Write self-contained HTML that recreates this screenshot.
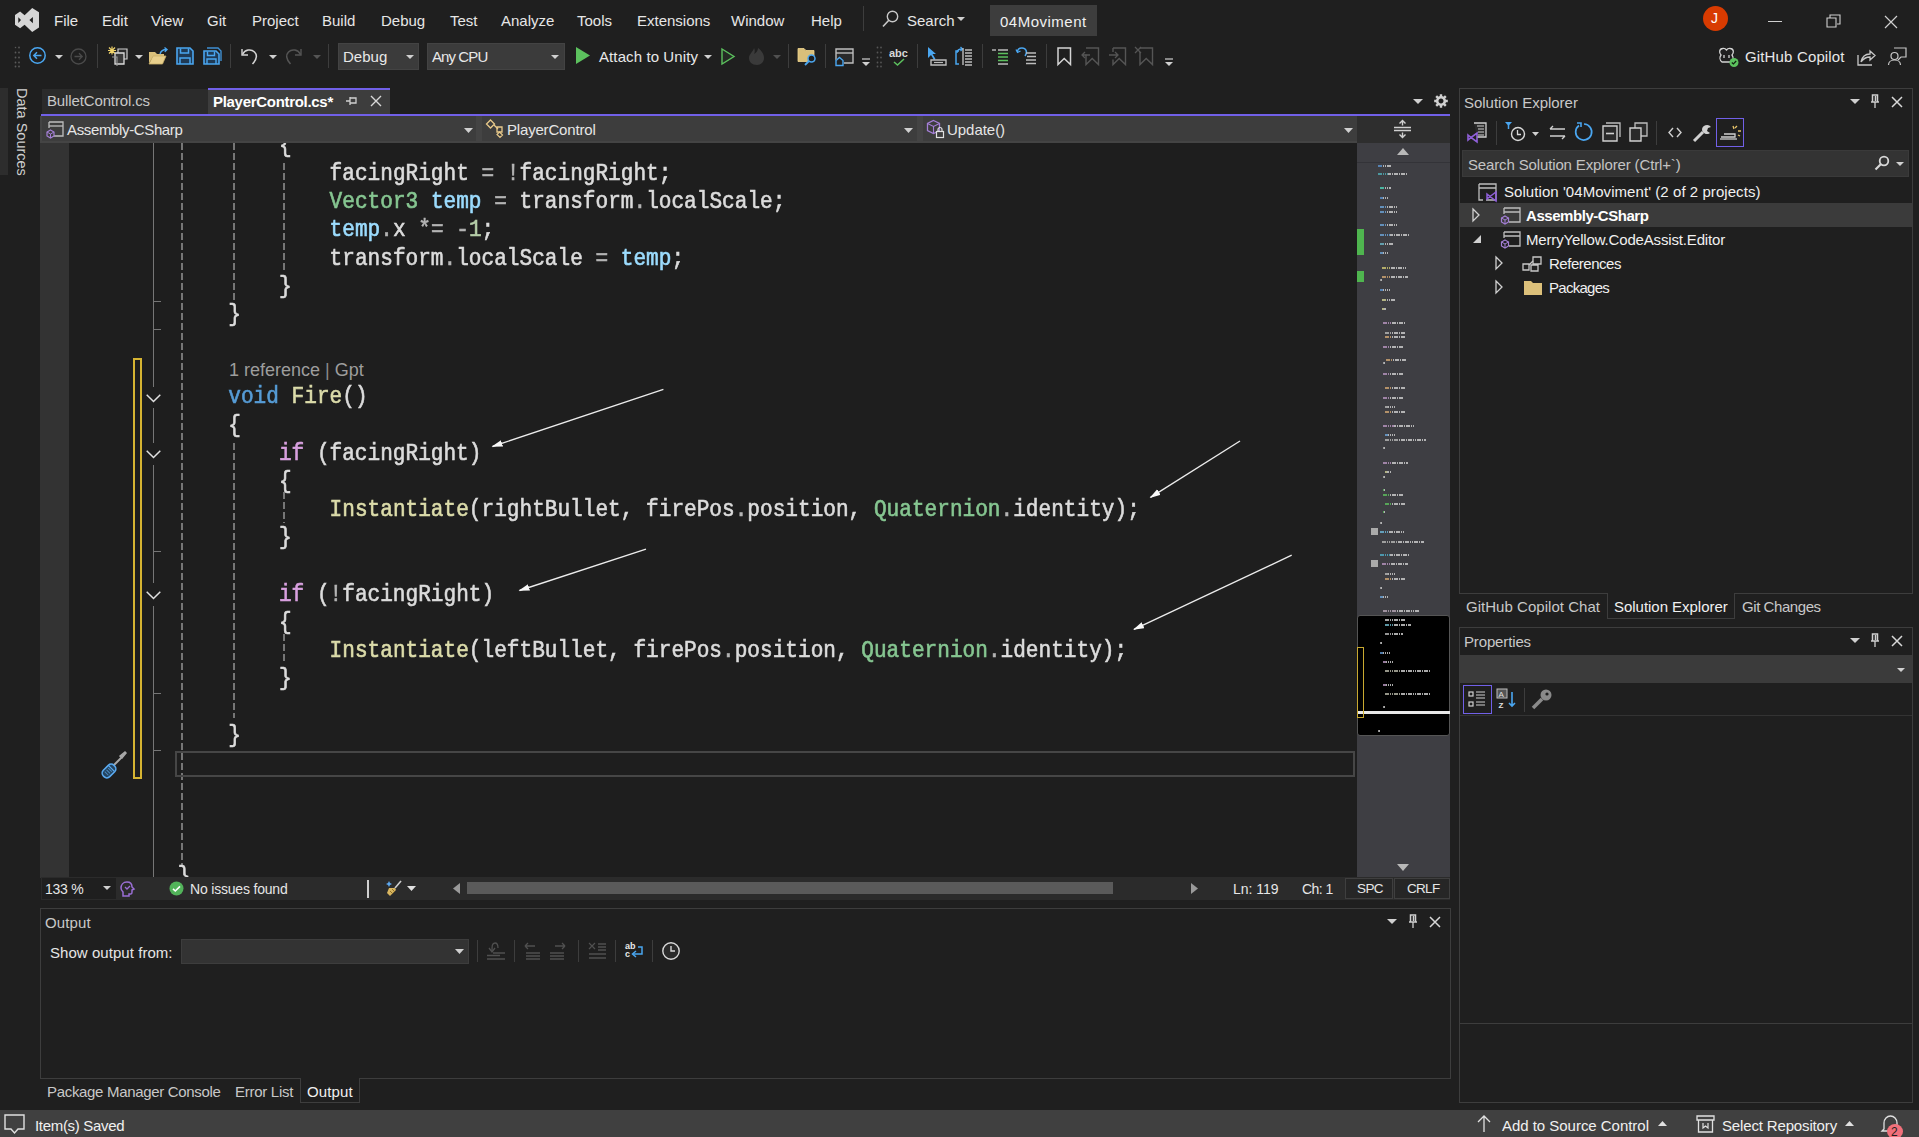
<!DOCTYPE html>
<html><head><meta charset="utf-8">
<style>
*{box-sizing:border-box;margin:0;padding:0}
html,body{width:1919px;height:1137px;overflow:hidden;background:#1f1f1f}
body{position:relative;font-family:"Liberation Sans",sans-serif;color:#f0f0f0;font-size:15px}
.a{position:absolute}
.t{position:absolute;white-space:pre;line-height:1}
.menu{top:13px;color:#e6e6e6;font-size:15px}
svg{position:absolute;overflow:visible}
/* code */
.code{position:absolute;font-family:"Liberation Mono",monospace;font-size:21.1px;white-space:pre;line-height:1;color:#dcdcdc;-webkit-text-stroke:0.55px currentColor;transform:scaleY(1.09);transform-origin:0 16px}
.kw{color:#569cd6}.ct{color:#d8a0df}.ty{color:#86c691}.lv{color:#9cdcfe}.fn{color:#dcdcaa}.nm{color:#b5cea8}.op{color:#b4b4b4}
</style></head><body>

<!-- ============ TITLE / MENU BAR ============ -->
<svg style="left:0;top:0" width="48" height="40"><path d="M15 15L20.1 11.6 24.6 15.3 32.2 8.1 39 12.2V27.4L32.2 31.9 24.6 24.8 20.1 28.2 15 24.8Z M18.3 17.2L21 20 18.3 22.9Z M32.9 17L29.4 20.1 32.9 23.2Z" fill="#d6d6d6" fill-rule="evenodd"/></svg>
<div class="t menu" style="left:54px">File</div>
<div class="t menu" style="left:102px">Edit</div>
<div class="t menu" style="left:151px">View</div>
<div class="t menu" style="left:207px">Git</div>
<div class="t menu" style="left:252px">Project</div>
<div class="t menu" style="left:322px">Build</div>
<div class="t menu" style="left:381px">Debug</div>
<div class="t menu" style="left:450px">Test</div>
<div class="t menu" style="left:501px">Analyze</div>
<div class="t menu" style="left:577px">Tools</div>
<div class="t menu" style="left:637px">Extensions</div>
<div class="t menu" style="left:731px">Window</div>
<div class="t menu" style="left:811px">Help</div>
<div class="a" style="left:863px;top:6px;width:1px;height:25px;background:#3d3d3d"></div>


<!-- ============ TOOLBAR ============ -->
<svg style="left:14px;top:46px" width="7" height="22"><g fill="#5a5a5a"><circle cx="1.5" cy="1.5" r=".75"/><circle cx="5" cy="1.5" r=".9"/><circle cx="1.5" cy="6.5" r=".9"/><circle cx="5" cy="6.5" r=".9"/><circle cx="1.5" cy="11.5" r=".9"/><circle cx="5" cy="11.5" r=".9"/><circle cx="1.5" cy="16.5" r=".9"/><circle cx="5" cy="16.5" r=".9"/><circle cx="1.5" cy="20.5" r=".9"/><circle cx="5" cy="20.5" r=".9"/></g></svg>
<svg style="left:29px;top:47px" width="17" height="17"><circle cx="8.5" cy="8.5" r="7.7" fill="none" stroke="#4aa6f0" stroke-width="1.5"/><path d="M12.5 8.5H5M8 5.2L4.8 8.5L8 11.8" fill="none" stroke="#4aa6f0" stroke-width="1.5"/></svg>
<svg style="left:55px;top:55px" width="8" height="4"><path d="M0 0H8L4 4Z" fill="#d0d0d0"/></svg>
<svg style="left:70px;top:48px" width="17" height="17"><circle cx="8.5" cy="8.5" r="7.5" fill="none" stroke="#4a4a4a" stroke-width="1.3"/><path d="M4.5 8.5H12M9 5.2L12.2 8.5L9 11.8" fill="none" stroke="#4a4a4a" stroke-width="1.3"/></svg>
<div class="a" style="left:97px;top:44px;width:1px;height:24px;background:#3d3d3d"></div>
<svg style="left:107px;top:46px" width="21" height="21"><path d="M11 3h9v10h-9z" fill="#2d2d2d" stroke="#cfcfcf" stroke-width="1.2"/><path d="M8 7h9v11H8z" fill="#3a3a3a" stroke="#dcdcdc" stroke-width="1.3"/><path d="M5 11h5v9" fill="none" stroke="#9a9a9a" stroke-width="1.1"/><g stroke="#f0d36a" stroke-width="1.2"><path d="M5 .5v8M1 4.5h8M2 1.5l6 6M8 1.5l-6 6"/></g></svg>
<svg style="left:135px;top:55px" width="8" height="4"><path d="M0 0H8L4 4Z" fill="#d0d0d0"/></svg>
<svg style="left:148px;top:47px" width="21" height="19"><path d="M1 5h6l2 2h7v3H5L1 16z" fill="#d9bf7a"/><path d="M1 17l4-8h13l-3.5 8z" fill="#e8cf8c" stroke="#c9ae68" stroke-width=".8"/><path d="M12 7c1-3.5 3-4.5 6.5-4.5M16.5 .5l2.5 2-2.2 2.4" fill="none" stroke="#4aa6f0" stroke-width="1.4"/></svg>
<svg style="left:176px;top:47px" width="18" height="18"><path d="M1 1h13l3 3v13H1z" fill="#1f3a55" stroke="#4aa6f0" stroke-width="1.6"/><path d="M4.5 1.5v4.5h8V1.5M4 17v-6h10v6" fill="none" stroke="#4aa6f0" stroke-width="1.5"/></svg>
<svg style="left:203px;top:47px" width="19" height="18"><path d="M4 1h11l3 3v10" fill="none" stroke="#3f8fd2" stroke-width="1.4"/><path d="M1 4h12l3 3v10H1z" fill="#1f3a55" stroke="#4aa6f0" stroke-width="1.6"/><path d="M4.5 4.5v4h7v-4M4 17v-5h9v5" fill="none" stroke="#4aa6f0" stroke-width="1.4"/></svg>
<div class="a" style="left:230px;top:44px;width:1px;height:24px;background:#3d3d3d"></div>
<svg style="left:240px;top:46px" width="18" height="20"><path d="M2 3v6h6" fill="none" stroke="#d4d4d4" stroke-width="1.4"/><path d="M2.5 8.5C5 3.5 11 2.5 14.5 6c3 3 2.5 7-2 12" fill="none" stroke="#d4d4d4" stroke-width="1.5"/></svg>
<svg style="left:269px;top:55px" width="8" height="4"><path d="M0 0H8L4 4Z" fill="#d0d0d0"/></svg>
<svg style="left:285px;top:46px" width="18" height="20"><path d="M16 3v6h-6" fill="none" stroke="#555" stroke-width="1.4"/><path d="M15.5 8.5C13 3.5 7 2.5 3.5 6c-3 3-2.5 7 2 12" fill="none" stroke="#555" stroke-width="1.5"/></svg>
<svg style="left:313px;top:55px" width="8" height="4"><path d="M0 0H8L4 4Z" fill="#555"/></svg>
<div class="a" style="left:328px;top:44px;width:1px;height:24px;background:#3d3d3d"></div>
<div class="a" style="left:338px;top:43px;width:81px;height:27px;background:#3b3b3b;border:1px solid #434343"></div>
<div class="t" style="left:343px;top:49px;color:#e8e8e8;letter-spacing:0.01px">Debug</div>
<svg style="left:406px;top:55px" width="8" height="4"><path d="M0 0H8L4 4Z" fill="#d0d0d0"/></svg>
<div class="a" style="left:427px;top:43px;width:138px;height:27px;background:#3b3b3b;border:1px solid #434343"></div>
<div class="t" style="left:432px;top:49px;color:#e8e8e8;letter-spacing:-0.91px">Any CPU</div>
<svg style="left:551px;top:55px" width="8" height="4"><path d="M0 0H8L4 4Z" fill="#d0d0d0"/></svg>
<svg style="left:576px;top:47px" width="14" height="17"><path d="M0 0L14 8.5L0 17Z" fill="#5cc15e"/></svg>
<div class="t" style="left:599px;top:49px;color:#e8e8e8;letter-spacing:0.1px">Attach to Unity</div>
<svg style="left:704px;top:55px" width="8" height="4"><path d="M0 0H8L4 4Z" fill="#d0d0d0"/></svg>
<svg style="left:721px;top:48px" width="14" height="17"><path d="M1 1L13 8.5L1 16Z" fill="#242c24" stroke="#5cc15e" stroke-width="1.4"/></svg>
<svg style="left:748px;top:46px" width="19" height="20"><path d="M9 19c-5 0-8-3-8-7 0-4 4-6 5-10 1 2 1 4 0 6 2-1 4-3 4-6 3 2 6 6 6 10 0 4-3 7-7 7z" fill="#3a3a3a"/></svg>
<svg style="left:773px;top:55px" width="8" height="4"><path d="M0 0H8L4 4Z" fill="#505050"/></svg>
<div class="a" style="left:788px;top:44px;width:1px;height:24px;background:#3d3d3d"></div>
<svg style="left:797px;top:47px" width="21" height="19"><path d="M1 1.5h6l2 2h8v11H1z" fill="#d9bf7a" stroke="#f0d58e" stroke-width=".8"/><circle cx="14.5" cy="11.5" r="3.5" fill="#1f1f1f" stroke="#4aa6f0" stroke-width="1.5"/><path d="M12 14l-4 4" stroke="#4aa6f0" stroke-width="1.8"/></svg>
<div class="a" style="left:825px;top:44px;width:1px;height:24px;background:#3d3d3d"></div>
<svg style="left:835px;top:48px" width="19" height="19"><path d="M1 1h17v14H1z" fill="#2a2a2a" stroke="#bdbdbd" stroke-width="1.4"/><path d="M1 5h17" stroke="#bdbdbd" stroke-width="1.4"/><path d="M0 12.5L4.5 8.5 9 12.5V18H0z" fill="#1f1f1f"/><path d="M1 12.5L4.5 9.5 8 12.5V17.5H1z" fill="none" stroke="#4aa6f0" stroke-width="1.4"/></svg>
<svg style="left:862px;top:59px" width="8" height="8"><path d="M0 0h8" stroke="#d0d0d0" stroke-width="1.2"/><path d="M0 3H8L4 7Z" fill="#d0d0d0"/></svg>
<svg style="left:876px;top:46px" width="7" height="22"><g fill="#555"><circle cx="1.5" cy="1.5" r=".9"/><circle cx="5" cy="1.5" r=".9"/><circle cx="1.5" cy="6.5" r=".9"/><circle cx="5" cy="6.5" r=".9"/><circle cx="1.5" cy="11.5" r=".9"/><circle cx="5" cy="11.5" r=".9"/><circle cx="1.5" cy="16.5" r=".9"/><circle cx="5" cy="16.5" r=".9"/><circle cx="1.5" cy="20.5" r=".9"/><circle cx="5" cy="20.5" r=".9"/></g></svg>
<div class="t" style="left:889px;top:48px;font-size:11px;font-weight:bold;color:#d8d8d8">abc</div>
<svg style="left:893px;top:58px" width="12" height="8"><path d="M1 4l3.5 3L11 1" fill="none" stroke="#5cc15e" stroke-width="1.5"/></svg>
<div class="a" style="left:917px;top:44px;width:1px;height:24px;background:#3d3d3d"></div>
<svg style="left:927px;top:47px" width="20" height="19"><path d="M1 0v11l3-3 3 5 1.5-1-3-5H9z" fill="#4aa6f0"/><path d="M4 13h15v5H4z" fill="none" stroke="#bdbdbd" stroke-width="1.4"/><path d="M7 15.5h9" stroke="#bdbdbd" stroke-width="1.2"/></svg>
<svg style="left:953px;top:47px" width="20" height="19"><path d="M6 4H3v13h3" fill="none" stroke="#4aa6f0" stroke-width="1.5"/><path d="M4 6c0-3 2-4 5-4M7.5 0l2 2-2 2" fill="none" stroke="#4aa6f0" stroke-width="1.3"/><path d="M10 1v17" stroke="#bdbdbd" stroke-width="1.4"/><g stroke="#bdbdbd" stroke-width="1.3"><path d="M12 3h7M12 6h7M12 9h7M12 12h7M12 15h7M12 18h7"/></g></svg>
<div class="a" style="left:982px;top:44px;width:1px;height:24px;background:#3d3d3d"></div>
<svg style="left:992px;top:48px" width="17" height="17"><g stroke-width="1.4"><path d="M0 2h4" stroke="#bdbdbd"/><path d="M6 2h10M6 16h10" stroke="#bdbdbd"/><path d="M6 5.5h10M6 9h10M6 12.5h10" stroke="#5cc15e"/></g></svg>
<svg style="left:1016px;top:47px" width="21" height="18"><path d="M9 9C12 5 10 1 6 1 3 1 1.5 3 1.5 5" fill="none" stroke="#4aa6f0" stroke-width="1.5"/><path d="M0 2.5l1.5 3 3-1.5" fill="none" stroke="#4aa6f0" stroke-width="1.3"/><g stroke="#bdbdbd" stroke-width="1.3"><path d="M10 6h10M11 9.5h9M10 13h10M10 16.5h10"/></g></svg>
<div class="a" style="left:1046px;top:44px;width:1px;height:24px;background:#3d3d3d"></div>
<svg style="left:1057px;top:47px" width="15" height="19"><path d="M1 1h12.5v16.5L7.2 11.5 1 17.5z" fill="none" stroke="#d4d4d4" stroke-width="1.5"/></svg>
<svg style="left:1082px;top:47px" width="18" height="19"><path d="M4 1h12.5v16.5L10.2 11.5 4 17.5v-10" fill="none" stroke="#555" stroke-width="1.4"/><path d="M0 8h8M3 5L0 8l3 3" fill="none" stroke="#555" stroke-width="1.3"/></svg>
<svg style="left:1109px;top:47px" width="18" height="19"><path d="M4 1h12.5v16.5L10.2 11.5 4 17.5v-5M4 1v4" fill="none" stroke="#555" stroke-width="1.4"/><path d="M0 8h9M6 5l3 3-3 3" fill="none" stroke="#555" stroke-width="1.3"/></svg>
<svg style="left:1135px;top:47px" width="19" height="19"><path d="M5 1h12.5v16.5L11.2 11.5 5 17.5V5" fill="none" stroke="#555" stroke-width="1.4"/><path d="M0 0l6 6M6 0L0 6" stroke="#555" stroke-width="1.3"/></svg>
<svg style="left:1165px;top:59px" width="8" height="8"><path d="M0 0h8" stroke="#d0d0d0" stroke-width="1.2"/><path d="M0 3H8L4 7Z" fill="#d0d0d0"/></svg>

<!-- right top -->
<div class="t menu" style="left:907px;top:13px">Search</div>
<svg style="left:882px;top:10px" width="17" height="18"><circle cx="10.5" cy="6.5" r="5.2" fill="none" stroke="#c8c8c8" stroke-width="1.4"/><path d="M6.8 10.2L1 16.5" stroke="#c8c8c8" stroke-width="1.6"/></svg>
<svg style="left:957px;top:17px" width="8" height="4"><path d="M0 0H8L4 4Z" fill="#d0d0d0"/></svg>
<div class="a" style="left:990px;top:5px;width:107px;height:31px;background:#3d3d3d"></div>
<div class="t" style="left:1000px;top:14px;color:#f0f0f0;letter-spacing:0.5px">04Moviment</div>
<div class="a" style="left:1703px;top:6px;width:25px;height:25px;border-radius:50%;background:#d83b01"></div>
<div class="t" style="left:1711px;top:11px;color:#fff;font-size:14px">J</div>
<div class="a" style="left:1768px;top:21px;width:14px;height:1px;background:#d0d0d0"></div>
<svg style="left:1826px;top:14px" width="15" height="14"><path d="M1 4h9v9H1z" fill="none" stroke="#d0d0d0" stroke-width="1.1"/><path d="M4 4V1h10v9h-3" fill="none" stroke="#d0d0d0" stroke-width="1.1"/></svg>
<svg style="left:1884px;top:15px" width="14" height="14"><path d="M1 1l12 12M13 1L1 13" stroke="#d0d0d0" stroke-width="1.2"/></svg>
<svg style="left:1718px;top:47px" width="21" height="20"><path d="M3 8C1 6 1 2 4.5 1.5 7 1 8.5 3 8.5 3S10 1 12.5 1.5C16 2 16 6 14 8c1.5 2 1.5 5-1 7H4C1.5 13 1.5 10 3 8z" fill="none" stroke="#d4d4d4" stroke-width="1.3"/><path d="M6 8v3M11 8v3" stroke="#d4d4d4" stroke-width="1.3"/><circle cx="16" cy="15.5" r="4.5" fill="#5cc15e"/><path d="M13.8 15.5l1.6 1.5 2.8-3" fill="none" stroke="#102010" stroke-width="1.2"/></svg>
<div class="t" style="left:1745px;top:49px;color:#e8e8e8;letter-spacing:0.15px">GitHub Copilot</div>
<svg style="left:1857px;top:48px" width="18" height="18"><path d="M1 7v10h14" fill="none" stroke="#c8c8c8" stroke-width="1.3"/><path d="M4 14c1-5 4-8 9-8V3l5 4.5-5 4.5V9c-4 0-7 2-9 5z" fill="none" stroke="#c8c8c8" stroke-width="1.3"/></svg>
<svg style="left:1888px;top:47px" width="19" height="19"><path d="M6 1h12v9h-5l-3 3" fill="none" stroke="#c8c8c8" stroke-width="1.2"/><circle cx="6.5" cy="9" r="3.5" fill="#1f1f1f" stroke="#c8c8c8" stroke-width="1.2"/><path d="M0.5 18c0-3 2.5-5 6-5s6 2 6 5" fill="none" stroke="#c8c8c8" stroke-width="1.2"/></svg>


<!-- ============ LEFT STRIP ============ -->
<div class="a" style="left:0;top:88px;width:8px;height:87px;background:#2d2d2d"></div>
<div class="t" style="left:13px;top:88px;color:#cfcfcf;font-size:14.5px;transform-origin:0 0;transform:translate(16px,0) rotate(90deg)">Data Sources</div>

<!-- ============ DOC TABS ============ -->
<div class="a" style="left:42px;top:89px;width:166px;height:25px;background:#2b2b2b"></div>
<div class="t" style="left:47px;top:93px;color:#c8c8c8;font-size:15px;letter-spacing:-0.13px">BulletControl.cs</div>
<div class="a" style="left:208px;top:88px;width:182px;height:26px;background:#3d3d3d;border-top:2px solid #7160e8"></div>
<div class="t" style="left:213px;top:94px;color:#fff;font-size:15px;font-weight:bold;letter-spacing:-0.3px">PlayerControl.cs*</div>
<svg style="left:346px;top:96px" width="12" height="10"><path d="M0 5h4M4 1v8M4 2h6v5H4M4 7" fill="none" stroke="#cfcfcf" stroke-width="1.3"/></svg>
<svg style="left:370px;top:95px" width="12" height="12"><path d="M1 1l10 10M11 1L1 11" stroke="#d8d8d8" stroke-width="1.4"/></svg>
<svg style="left:1413px;top:99px" width="10" height="5"><path d="M0 0H10L5 5Z" fill="#d0d0d0"/></svg>
<svg style="left:1434px;top:94px" width="14" height="14"><g transform="translate(7 7)"><circle r="3.8" fill="none" stroke="#d0d0d0" stroke-width="2.6"/><g stroke="#d0d0d0" stroke-width="2.4"><path d="M0-6.8V-4M0 4V6.8M-6.8 0H-4M4 0H6.8M-4.8-4.8l2 2M2.8 2.8l2 2M4.8-4.8l-2 2M-2.8 2.8l-2 2"/></g></g></svg>
<div class="a" style="left:41px;top:114px;width:1409px;height:2px;background:#7160e8"></div>

<!-- ============ NAV BAR ============ -->
<div class="a" style="left:40px;top:116px;width:1317px;height:27px;background:#444444"></div>
<div class="a" style="left:42px;top:116px;width:434px;height:25px;background:#3d3d3d"></div>
<div class="a" style="left:482px;top:116px;width:435px;height:25px;background:#3d3d3d"></div>
<div class="a" style="left:923px;top:116px;width:434px;height:25px;background:#3d3d3d"></div>
<div class="a" style="left:1357px;top:116px;width:93px;height:27px;background:#2e2e2e"></div>
<svg style="left:46px;top:121px" width="19" height="18"><path d="M3 1h14v14H6" fill="none" stroke="#bdbdbd" stroke-width="1.3"/><path d="M3 5h14" stroke="#bdbdbd" stroke-width="1.3"/><path d="M3 1v6" stroke="#bdbdbd" stroke-width="1.3"/><path d="M4.5 9l3.5 2v4l-3.5 2-3.5-2v-4z" fill="#3d3d3d" stroke="#a47fd6" stroke-width="1.2"/><path d="M1 11l3.5 2 3.5-2M4.5 13v4" fill="none" stroke="#a47fd6" stroke-width="1"/></svg>
<div class="t" style="left:67px;top:122px;color:#e6e6e6;letter-spacing:-0.36px">Assembly-CSharp</div>
<svg style="left:464px;top:128px" width="9" height="5"><path d="M0 0H9L4.5 5Z" fill="#d0d0d0"/></svg>
<svg style="left:486px;top:119px" width="20" height="20"><path d="M4.5 1l4 4-4 4-4-4z" fill="none" stroke="#e8c98a" stroke-width="1.3"/><path d="M8 6l4 4" stroke="#e8c98a" stroke-width="1.2"/><path d="M11 8h5v5h-5z" fill="none" stroke="#e8c98a" stroke-width="1.3"/><path d="M13.5 13l3 3-2.5 2.5-3-3z" fill="none" stroke="#e8c98a" stroke-width="1.2"/></svg>
<div class="t" style="left:507px;top:122px;color:#e6e6e6;letter-spacing:-0.18px">PlayerControl</div>
<svg style="left:904px;top:128px" width="9" height="5"><path d="M0 0H9L4.5 5Z" fill="#d0d0d0"/></svg>
<svg style="left:926px;top:119px" width="20" height="20"><path d="M7.5 1.5l6 3v7l-6 3-6-3v-7z" fill="none" stroke="#a47fd6" stroke-width="1.3"/><path d="M1.5 4.5l6 3 6-3M7.5 7.5v7" fill="none" stroke="#a47fd6" stroke-width="1.1"/><rect x="10.5" y="12.5" width="7" height="6" fill="#3d3d3d" stroke="#e0e0e0" stroke-width="1.2"/><path d="M12 12.5v-2a2 2 0 0 1 4 0v2" fill="none" stroke="#e0e0e0" stroke-width="1.2"/></svg>
<div class="t" style="left:947px;top:122px;color:#e6e6e6;letter-spacing:-0.04px">Update()</div>
<svg style="left:1344px;top:128px" width="9" height="5"><path d="M0 0H9L4.5 5Z" fill="#d0d0d0"/></svg>
<svg style="left:1394px;top:120px" width="17" height="18"><path d="M0 7.5h17M0 10.5h17" stroke="#d0d0d0" stroke-width="1.5"/><path d="M8.5 1v4.5M8.5 12.5V17M5.5 3.5l3-3 3 3M5.5 14.5l3 3 3-3" fill="none" stroke="#d0d0d0" stroke-width="1.4"/></svg>

<!-- ============ EDITOR ============ -->
<div class="a" style="left:41px;top:143px;width:1316px;height:735px;background:#1e1e1e"></div>
<div class="a" style="left:40px;top:143px;width:29px;height:735px;background:#333333"></div>


<div class="a" style="left:41px;top:143px;width:1316px;height:734px;overflow:hidden">
<div class="a" style="left:140px;top:0px;width:2px;height:723px;background:repeating-linear-gradient(#767676 0 7px,transparent 7px 10px)"></div><div class="a" style="left:192px;top:0px;width:2px;height:157px;background:repeating-linear-gradient(#767676 0 7px,transparent 7px 10px)"></div><div class="a" style="left:242px;top:20px;width:2px;height:110px;background:repeating-linear-gradient(#767676 0 7px,transparent 7px 10px)"></div><div class="a" style="left:192px;top:300px;width:2px;height:275px;background:repeating-linear-gradient(#767676 0 7px,transparent 7px 10px)"></div><div class="a" style="left:242px;top:349px;width:2px;height:31px;background:repeating-linear-gradient(#767676 0 7px,transparent 7px 10px)"></div><div class="a" style="left:242px;top:491px;width:2px;height:30px;background:repeating-linear-gradient(#767676 0 7px,transparent 7px 10px)"></div><div class="a" style="left:112px;top:0px;width:1px;height:244px;background:#767676"></div><div class="a" style="left:112px;top:158px;width:8px;height:1px;background:#767676"></div><div class="a" style="left:112px;top:186px;width:8px;height:1px;background:#767676"></div><svg style="left:105px;top:251px" width="15" height="9"><path d="M.7 .7L7.5 7.5L14.3 .7" fill="none" stroke="#e0e0e0" stroke-width="1.5"/></svg><div class="a" style="left:112px;top:265px;width:1px;height:35px;background:#767676"></div><svg style="left:105px;top:307px" width="15" height="9"><path d="M.7 .7L7.5 7.5L14.3 .7" fill="none" stroke="#e0e0e0" stroke-width="1.5"/></svg><div class="a" style="left:112px;top:322px;width:1px;height:118px;background:#767676"></div><div class="a" style="left:112px;top:408px;width:8px;height:1px;background:#767676"></div><svg style="left:105px;top:448px" width="15" height="9"><path d="M.7 .7L7.5 7.5L14.3 .7" fill="none" stroke="#e0e0e0" stroke-width="1.5"/></svg><div class="a" style="left:112px;top:463px;width:1px;height:271px;background:#767676"></div><div class="a" style="left:112px;top:550px;width:8px;height:1px;background:#767676"></div><div class="a" style="left:112px;top:607px;width:8px;height:1px;background:#767676"></div>
<div class="a" style="left:134px;top:608px;width:1180px;height:26px;border:2.5px solid #464646"></div>
<div class="a" style="left:92px;top:215px;width:9px;height:421px;border:2px solid #d6b432"></div>
<div class="t" style="left:188px;top:218px;font-size:18px;color:#9d9d9d">1 reference <span style="color:#8a8a8a">|</span> Gpt</div>
<div class="code" style="left:237.89999999999998px;top:-7.2px">{</div><div class="code" style="left:288.6px;top:21.0px">facingRight <span class="op">=</span> <span class="op">!</span>facingRight;</div><div class="code" style="left:288.6px;top:49.2px"><span class="ty">Vector3</span> <span class="lv">temp</span> <span class="op">=</span> transform<span class="op">.</span>localScale;</div><div class="code" style="left:288.6px;top:77.4px"><span class="lv">temp</span><span class="op">.</span>x <span class="op">*=</span> <span class="op">-</span><span class="nm">1</span>;</div><div class="code" style="left:288.6px;top:105.6px">transform<span class="op">.</span>localScale <span class="op">=</span> <span class="lv">temp</span>;</div><div class="code" style="left:237.89999999999998px;top:133.8px">}</div><div class="code" style="left:187.3px;top:162.0px">}</div><div class="code" style="left:187.3px;top:244.3px"><span class="kw">void</span> <span class="fn">Fire</span>()</div><div class="code" style="left:187.3px;top:272.5px">{</div><div class="code" style="left:237.89999999999998px;top:300.7px"><span class="ct">if</span> (facingRight)</div><div class="code" style="left:237.89999999999998px;top:328.9px">{</div><div class="code" style="left:288.6px;top:357.1px"><span class="fn">Instantiate</span>(rightBullet, firePos<span class="op">.</span>position, <span class="ty">Quaternion</span><span class="op">.</span>identity);</div><div class="code" style="left:237.89999999999998px;top:385.3px">}</div><div class="code" style="left:237.89999999999998px;top:441.7px"><span class="ct">if</span> (<span class="op">!</span>facingRight)</div><div class="code" style="left:237.89999999999998px;top:469.9px">{</div><div class="code" style="left:288.6px;top:498.1px"><span class="fn">Instantiate</span>(leftBullet, firePos<span class="op">.</span>position, <span class="ty">Quaternion</span><span class="op">.</span>identity);</div><div class="code" style="left:237.89999999999998px;top:526.3px">}</div><div class="code" style="left:187.3px;top:582.7px">}</div><div class="code" style="left:136.7px;top:723.7px">}</div>
<svg style="left:58px;top:607px" width="30" height="30"><path d="M14.5 15.5L23 7" stroke="#a8a8a8" stroke-width="2"/><path d="M21 6l5-4 1 1-4 5z" fill="#a8a8a8" stroke="#a8a8a8" stroke-width="1.5"/><g transform="translate(10 21) rotate(-45)"><rect x="-7.5" y="-4.5" width="15" height="9" rx="4" fill="#23435f" stroke="#5aaaf0" stroke-width="1.6"/><path d="M-3.5 -2.5v5M-1 -2.5v5M1.5 -2.5v5" stroke="#4a8ac0" stroke-width="1"/><path d="M3.5 -4v8" stroke="#5aaaf0" stroke-width="1.2"/></g></svg>
</div>


<!-- ============ MINIMAP ============ -->
<div class="a" style="left:1357px;top:143px;width:93px;height:734px;background:#3e3e43"></div>
<div class="a" style="left:1357px;top:162px;width:93px;height:1px;background:#333338"></div>
<svg style="left:1397px;top:148px" width="12" height="7"><path d="M0 7H12L6 0Z" fill="#b8b8b8"/></svg>
<svg style="left:1397px;top:864px" width="12" height="7"><path d="M0 0H12L6 7Z" fill="#b8b8b8"/></svg>
<div class="a" style="left:1357px;top:229px;width:7px;height:26px;background:#4fb54f"></div>
<div class="a" style="left:1357px;top:271px;width:7px;height:11px;background:#4fb54f"></div>
<div class="a" style="left:1371px;top:528px;width:7px;height:7px;background:#aaa"></div>
<div class="a" style="left:1371px;top:560px;width:7px;height:7px;background:#aaa"></div>
<div class="a" style="left:1357px;top:615px;width:93px;height:121px;background:#000;border:1px solid #555;border-radius:3px"></div>
<div class="a" style="left:1378px;top:165px;width:14px;height:2px;background:linear-gradient(90deg,#5b8fc7 0 35%,#c8c8c8 35%);-webkit-mask:repeating-linear-gradient(90deg,#000 0 1.6px,transparent 1.6px 2.3px);opacity:.85"></div><div class="a" style="left:1378px;top:173px;width:29px;height:2px;background:linear-gradient(90deg,#4fa7b0 0 35%,#c8c8c8 35%);-webkit-mask:repeating-linear-gradient(90deg,#000 0 1.6px,transparent 1.6px 2.3px);opacity:.85"></div><div class="a" style="left:1380px;top:187px;width:11px;height:2px;background:linear-gradient(90deg,#4ec9b0 0 35%,#c8c8c8 35%);-webkit-mask:repeating-linear-gradient(90deg,#000 0 1.6px,transparent 1.6px 2.3px);opacity:.85"></div><div class="a" style="left:1380px;top:197px;width:9px;height:2px;background:linear-gradient(90deg,#5b8fc7 0 35%,#c8c8c8 35%);-webkit-mask:repeating-linear-gradient(90deg,#000 0 1.6px,transparent 1.6px 2.3px);opacity:.85"></div><div class="a" style="left:1380px;top:206px;width:17px;height:2px;background:linear-gradient(90deg,#6a9fd0 0 35%,#c8c8c8 35%);-webkit-mask:repeating-linear-gradient(90deg,#000 0 1.6px,transparent 1.6px 2.3px);opacity:.85"></div><div class="a" style="left:1380px;top:211px;width:17px;height:2px;background:linear-gradient(90deg,#6a9fd0 0 35%,#c8c8c8 35%);-webkit-mask:repeating-linear-gradient(90deg,#000 0 1.6px,transparent 1.6px 2.3px);opacity:.85"></div><div class="a" style="left:1380px;top:224px;width:17px;height:2px;background:linear-gradient(90deg,#6a9fd0 0 35%,#c8c8c8 35%);-webkit-mask:repeating-linear-gradient(90deg,#000 0 1.6px,transparent 1.6px 2.3px);opacity:.85"></div><div class="a" style="left:1380px;top:234px;width:29px;height:2px;background:linear-gradient(90deg,#6a9fd0 0 35%,#c8c8c8 35%);-webkit-mask:repeating-linear-gradient(90deg,#000 0 1.6px,transparent 1.6px 2.3px);opacity:.85"></div><div class="a" style="left:1380px;top:243px;width:14px;height:2px;background:linear-gradient(90deg,#6ab0c0 0 35%,#c8c8c8 35%);-webkit-mask:repeating-linear-gradient(90deg,#000 0 1.6px,transparent 1.6px 2.3px);opacity:.85"></div><div class="a" style="left:1380px;top:252px;width:9px;height:2px;background:linear-gradient(90deg,#6a9fd0 0 35%,#c8c8c8 35%);-webkit-mask:repeating-linear-gradient(90deg,#000 0 1.6px,transparent 1.6px 2.3px);opacity:.85"></div><div class="a" style="left:1382px;top:267px;width:24px;height:2px;background:linear-gradient(90deg,#c8c070 0 35%,#c8c8c8 35%);-webkit-mask:repeating-linear-gradient(90deg,#000 0 1.6px,transparent 1.6px 2.3px);opacity:.85"></div><div class="a" style="left:1382px;top:276px;width:26px;height:2px;background:linear-gradient(90deg,#c8a070 0 35%,#c8c8c8 35%);-webkit-mask:repeating-linear-gradient(90deg,#000 0 1.6px,transparent 1.6px 2.3px);opacity:.85"></div><div class="a" style="left:1380px;top:279px;width:2px;height:2px;background:linear-gradient(90deg,#aaa 0 35%,#c8c8c8 35%);-webkit-mask:repeating-linear-gradient(90deg,#000 0 1.6px,transparent 1.6px 2.3px);opacity:.85"></div><div class="a" style="left:1380px;top:289px;width:10px;height:2px;background:linear-gradient(90deg,#5b8fc7 0 35%,#c8c8c8 35%);-webkit-mask:repeating-linear-gradient(90deg,#000 0 1.6px,transparent 1.6px 2.3px);opacity:.85"></div><div class="a" style="left:1382px;top:299px;width:13px;height:2px;background:linear-gradient(90deg,#c8c890 0 35%,#c8c8c8 35%);-webkit-mask:repeating-linear-gradient(90deg,#000 0 1.6px,transparent 1.6px 2.3px);opacity:.85"></div><div class="a" style="left:1382px;top:308px;width:5px;height:2px;background:linear-gradient(90deg,#c8c890 0 35%,#c8c8c8 35%);-webkit-mask:repeating-linear-gradient(90deg,#000 0 1.6px,transparent 1.6px 2.3px);opacity:.85"></div><div class="a" style="left:1383px;top:322px;width:22px;height:2px;background:linear-gradient(90deg,#b090b8 0 35%,#c8c8c8 35%);-webkit-mask:repeating-linear-gradient(90deg,#000 0 1.6px,transparent 1.6px 2.3px);opacity:.85"></div><div class="a" style="left:1385px;top:332px;width:21px;height:2px;background:linear-gradient(90deg,#b0b0b0 0 35%,#c8c8c8 35%);-webkit-mask:repeating-linear-gradient(90deg,#000 0 1.6px,transparent 1.6px 2.3px);opacity:.85"></div><div class="a" style="left:1385px;top:336px;width:21px;height:2px;background:linear-gradient(90deg,#c8a070 0 35%,#c8c8c8 35%);-webkit-mask:repeating-linear-gradient(90deg,#000 0 1.6px,transparent 1.6px 2.3px);opacity:.85"></div><div class="a" style="left:1383px;top:346px;width:20px;height:2px;background:linear-gradient(90deg,#b090b8 0 35%,#c8c8c8 35%);-webkit-mask:repeating-linear-gradient(90deg,#000 0 1.6px,transparent 1.6px 2.3px);opacity:.85"></div><div class="a" style="left:1386px;top:359px;width:20px;height:2px;background:linear-gradient(90deg,#c8a070 0 35%,#c8c8c8 35%);-webkit-mask:repeating-linear-gradient(90deg,#000 0 1.6px,transparent 1.6px 2.3px);opacity:.85"></div><div class="a" style="left:1383px;top:362px;width:2px;height:2px;background:linear-gradient(90deg,#aaa 0 35%,#c8c8c8 35%);-webkit-mask:repeating-linear-gradient(90deg,#000 0 1.6px,transparent 1.6px 2.3px);opacity:.85"></div><div class="a" style="left:1383px;top:373px;width:21px;height:2px;background:linear-gradient(90deg,#b090b8 0 35%,#c8c8c8 35%);-webkit-mask:repeating-linear-gradient(90deg,#000 0 1.6px,transparent 1.6px 2.3px);opacity:.85"></div><div class="a" style="left:1385px;top:387px;width:21px;height:2px;background:linear-gradient(90deg,#c8a070 0 35%,#c8c8c8 35%);-webkit-mask:repeating-linear-gradient(90deg,#000 0 1.6px,transparent 1.6px 2.3px);opacity:.85"></div><div class="a" style="left:1383px;top:397px;width:21px;height:2px;background:linear-gradient(90deg,#b090b8 0 35%,#c8c8c8 35%);-webkit-mask:repeating-linear-gradient(90deg,#000 0 1.6px,transparent 1.6px 2.3px);opacity:.85"></div><div class="a" style="left:1385px;top:406px;width:10px;height:2px;background:linear-gradient(90deg,#b0b0b0 0 35%,#c8c8c8 35%);-webkit-mask:repeating-linear-gradient(90deg,#000 0 1.6px,transparent 1.6px 2.3px);opacity:.85"></div><div class="a" style="left:1385px;top:411px;width:21px;height:2px;background:linear-gradient(90deg,#c8a070 0 35%,#c8c8c8 35%);-webkit-mask:repeating-linear-gradient(90deg,#000 0 1.6px,transparent 1.6px 2.3px);opacity:.85"></div><div class="a" style="left:1383px;top:425px;width:31px;height:2px;background:linear-gradient(90deg,#b090b8 0 35%,#c8c8c8 35%);-webkit-mask:repeating-linear-gradient(90deg,#000 0 1.6px,transparent 1.6px 2.3px);opacity:.85"></div><div class="a" style="left:1385px;top:434px;width:10px;height:2px;background:linear-gradient(90deg,#6a9fd0 0 35%,#c8c8c8 35%);-webkit-mask:repeating-linear-gradient(90deg,#000 0 1.6px,transparent 1.6px 2.3px);opacity:.85"></div><div class="a" style="left:1385px;top:439px;width:41px;height:2px;background:linear-gradient(90deg,#b0b0b0 0 35%,#c8c8c8 35%);-webkit-mask:repeating-linear-gradient(90deg,#000 0 1.6px,transparent 1.6px 2.3px);opacity:.85"></div><div class="a" style="left:1383px;top:447px;width:2px;height:2px;background:linear-gradient(90deg,#aaa 0 35%,#c8c8c8 35%);-webkit-mask:repeating-linear-gradient(90deg,#000 0 1.6px,transparent 1.6px 2.3px);opacity:.85"></div><div class="a" style="left:1383px;top:462px;width:25px;height:2px;background:linear-gradient(90deg,#b090b8 0 35%,#c8c8c8 35%);-webkit-mask:repeating-linear-gradient(90deg,#000 0 1.6px,transparent 1.6px 2.3px);opacity:.85"></div><div class="a" style="left:1385px;top:471px;width:7px;height:2px;background:linear-gradient(90deg,#c8c890 0 35%,#c8c8c8 35%);-webkit-mask:repeating-linear-gradient(90deg,#000 0 1.6px,transparent 1.6px 2.3px);opacity:.85"></div><div class="a" style="left:1383px;top:476px;width:2px;height:2px;background:linear-gradient(90deg,#aaa 0 35%,#c8c8c8 35%);-webkit-mask:repeating-linear-gradient(90deg,#000 0 1.6px,transparent 1.6px 2.3px);opacity:.85"></div><div class="a" style="left:1383px;top:489px;width:2px;height:2px;background:linear-gradient(90deg,#5cb85c 0 35%,#c8c8c8 35%);-webkit-mask:repeating-linear-gradient(90deg,#000 0 1.6px,transparent 1.6px 2.3px);opacity:.85"></div><div class="a" style="left:1383px;top:494px;width:21px;height:2px;background:linear-gradient(90deg,#5cb85c 0 35%,#c8c8c8 35%);-webkit-mask:repeating-linear-gradient(90deg,#000 0 1.6px,transparent 1.6px 2.3px);opacity:.85"></div><div class="a" style="left:1385px;top:503px;width:21px;height:2px;background:linear-gradient(90deg,#5cb85c 0 35%,#c8c8c8 35%);-webkit-mask:repeating-linear-gradient(90deg,#000 0 1.6px,transparent 1.6px 2.3px);opacity:.85"></div><div class="a" style="left:1383px;top:511px;width:2px;height:2px;background:linear-gradient(90deg,#5cb85c 0 35%,#c8c8c8 35%);-webkit-mask:repeating-linear-gradient(90deg,#000 0 1.6px,transparent 1.6px 2.3px);opacity:.85"></div><div class="a" style="left:1380px;top:522px;width:2px;height:2px;background:linear-gradient(90deg,#aaa 0 35%,#c8c8c8 35%);-webkit-mask:repeating-linear-gradient(90deg,#000 0 1.6px,transparent 1.6px 2.3px);opacity:.85"></div><div class="a" style="left:1380px;top:531px;width:24px;height:2px;background:linear-gradient(90deg,#6ab0d0 0 35%,#c8c8c8 35%);-webkit-mask:repeating-linear-gradient(90deg,#000 0 1.6px,transparent 1.6px 2.3px);opacity:.85"></div><div class="a" style="left:1382px;top:541px;width:42px;height:2px;background:linear-gradient(90deg,#b0b0b0 0 35%,#c8c8c8 35%);-webkit-mask:repeating-linear-gradient(90deg,#000 0 1.6px,transparent 1.6px 2.3px);opacity:.85"></div><div class="a" style="left:1380px;top:554px;width:29px;height:2px;background:linear-gradient(90deg,#4fa7c0 0 35%,#c8c8c8 35%);-webkit-mask:repeating-linear-gradient(90deg,#000 0 1.6px,transparent 1.6px 2.3px);opacity:.85"></div><div class="a" style="left:1382px;top:563px;width:26px;height:2px;background:linear-gradient(90deg,#b090b8 0 35%,#c8c8c8 35%);-webkit-mask:repeating-linear-gradient(90deg,#000 0 1.6px,transparent 1.6px 2.3px);opacity:.85"></div><div class="a" style="left:1385px;top:573px;width:10px;height:2px;background:linear-gradient(90deg,#b0b0b0 0 35%,#c8c8c8 35%);-webkit-mask:repeating-linear-gradient(90deg,#000 0 1.6px,transparent 1.6px 2.3px);opacity:.85"></div><div class="a" style="left:1385px;top:578px;width:21px;height:2px;background:linear-gradient(90deg,#c8a070 0 35%,#c8c8c8 35%);-webkit-mask:repeating-linear-gradient(90deg,#000 0 1.6px,transparent 1.6px 2.3px);opacity:.85"></div><div class="a" style="left:1380px;top:587px;width:2px;height:2px;background:linear-gradient(90deg,#aaa 0 35%,#c8c8c8 35%);-webkit-mask:repeating-linear-gradient(90deg,#000 0 1.6px,transparent 1.6px 2.3px);opacity:.85"></div><div class="a" style="left:1380px;top:596px;width:8px;height:2px;background:linear-gradient(90deg,#6a9fd0 0 35%,#c8c8c8 35%);-webkit-mask:repeating-linear-gradient(90deg,#000 0 1.6px,transparent 1.6px 2.3px);opacity:.85"></div><div class="a" style="left:1383px;top:610px;width:37px;height:2px;background:linear-gradient(90deg,#b0a0b0 0 35%,#c8c8c8 35%);-webkit-mask:repeating-linear-gradient(90deg,#000 0 1.6px,transparent 1.6px 2.3px);opacity:.85"></div><div class="a" style="left:1385px;top:619px;width:20px;height:2px;background:linear-gradient(90deg,#c0c0c0 0 35%,#c8c8c8 35%);-webkit-mask:repeating-linear-gradient(90deg,#000 0 1.6px,transparent 1.6px 2.3px);opacity:.85"></div><div class="a" style="left:1385px;top:624px;width:26px;height:2px;background:linear-gradient(90deg,#6ab0c0 0 35%,#c8c8c8 35%);-webkit-mask:repeating-linear-gradient(90deg,#000 0 1.6px,transparent 1.6px 2.3px);opacity:.85"></div><div class="a" style="left:1385px;top:633px;width:18px;height:2px;background:linear-gradient(90deg,#b0b0b0 0 35%,#c8c8c8 35%);-webkit-mask:repeating-linear-gradient(90deg,#000 0 1.6px,transparent 1.6px 2.3px);opacity:.85"></div><div class="a" style="left:1380px;top:642px;width:2px;height:2px;background:linear-gradient(90deg,#aaa 0 35%,#c8c8c8 35%);-webkit-mask:repeating-linear-gradient(90deg,#000 0 1.6px,transparent 1.6px 2.3px);opacity:.85"></div><div class="a" style="left:1380px;top:652px;width:10px;height:2px;background:linear-gradient(90deg,#5b8fc7 0 35%,#c8c8c8 35%);-webkit-mask:repeating-linear-gradient(90deg,#000 0 1.6px,transparent 1.6px 2.3px);opacity:.85"></div><div class="a" style="left:1383px;top:661px;width:10px;height:2px;background:linear-gradient(90deg,#b090b8 0 35%,#c8c8c8 35%);-webkit-mask:repeating-linear-gradient(90deg,#000 0 1.6px,transparent 1.6px 2.3px);opacity:.85"></div><div class="a" style="left:1385px;top:670px;width:45px;height:2px;background:linear-gradient(90deg,#b0b0a0 0 35%,#c8c8c8 35%);-webkit-mask:repeating-linear-gradient(90deg,#000 0 1.6px,transparent 1.6px 2.3px);opacity:.85"></div><div class="a" style="left:1383px;top:684px;width:10px;height:2px;background:linear-gradient(90deg,#b090b8 0 35%,#c8c8c8 35%);-webkit-mask:repeating-linear-gradient(90deg,#000 0 1.6px,transparent 1.6px 2.3px);opacity:.85"></div><div class="a" style="left:1385px;top:693px;width:45px;height:2px;background:linear-gradient(90deg,#b0b0a0 0 35%,#c8c8c8 35%);-webkit-mask:repeating-linear-gradient(90deg,#000 0 1.6px,transparent 1.6px 2.3px);opacity:.85"></div><div class="a" style="left:1383px;top:706px;width:2px;height:2px;background:linear-gradient(90deg,#aaa 0 35%,#c8c8c8 35%);-webkit-mask:repeating-linear-gradient(90deg,#000 0 1.6px,transparent 1.6px 2.3px);opacity:.85"></div><div class="a" style="left:1378px;top:730px;width:2px;height:2px;background:linear-gradient(90deg,#aaa 0 35%,#c8c8c8 35%);-webkit-mask:repeating-linear-gradient(90deg,#000 0 1.6px,transparent 1.6px 2.3px);opacity:.85"></div>
<div class="a" style="left:1357px;top:711px;width:93px;height:3px;background:#e8e8e8"></div>
<div class="a" style="left:1357px;top:647px;width:7px;height:71px;border:1px solid #c9a930"></div>

<!-- ============ EDITOR STATUS ROW ============ -->
<div class="a" style="left:41px;top:877px;width:1409px;height:23px;background:#2b2b2b"></div>
<div class="a" style="left:42px;top:878px;width:74px;height:21px;background:#1f1f1f"></div>
<div class="t" style="left:45px;top:882px;color:#e6e6e6;font-size:14px;letter-spacing:-0.24px">133 %</div>
<svg style="left:103px;top:886px" width="8" height="4"><path d="M0 0H8L4 4Z" fill="#d0d0d0"/></svg>
<svg style="left:120px;top:881px" width="15" height="16"><path d="M7 1C3 1 1 4 1 7c0 2 1 3 2 4v4h6v-2h2c1 0 1-1 1-2V9l2-1-2-2C12 3 10 1 7 1z" fill="none" stroke="#9b6fd6" stroke-width="1.5"/><path d="M5 6l2 2 3-3" stroke="#9b6fd6" stroke-width="1.3" fill="none"/></svg>
<svg style="left:169px;top:881px" width="15" height="15"><circle cx="7.5" cy="7.5" r="7" fill="#52b35a"/><path d="M4 7.8l2.3 2.2 4.7-4.6" fill="none" stroke="#fff" stroke-width="1.6"/></svg>
<div class="t" style="left:190px;top:882px;color:#e6e6e6;font-size:14px;letter-spacing:-0.19px">No issues found</div>
<div class="a" style="left:367px;top:880px;width:2px;height:18px;background:#d0d0d0"></div>
<svg style="left:386px;top:879px" width="17" height="18"><path d="M9 9l6-7" stroke="#cfcfcf" stroke-width="1.6"/><path d="M3 9l6 0 1 2-6 6-3-3z" fill="#d8b560"/><path d="M4 12l3 3M6 10l3 3" stroke="#8a6a20" stroke-width=".9"/><path d="M3 2l1 2 2 1-2 1-1 2-1-2-2-1 2-1z" fill="#5ea9f0"/></svg>
<svg style="left:407px;top:886px" width="9" height="5"><path d="M0 0H9L4.5 5Z" fill="#e0e0e0"/></svg>
<svg style="left:453px;top:883px" width="7" height="11"><path d="M7 0V11L0 5.5Z" fill="#9a9a9a"/></svg>
<div class="a" style="left:467px;top:882px;width:646px;height:12px;background:#5a5a5a"></div>
<svg style="left:1191px;top:883px" width="7" height="11"><path d="M0 0V11L7 5.5Z" fill="#9a9a9a"/></svg>
<div class="t" style="left:1233px;top:882px;color:#e6e6e6;font-size:14px;letter-spacing:-0.04px">Ln: 119</div>
<div class="t" style="left:1302px;top:882px;color:#e6e6e6;font-size:14px;letter-spacing:-0.57px">Ch: 1</div>
<div class="a" style="left:1345px;top:878px;width:48px;height:21px;border:1px solid #3f3f3f;background:#262626"></div>
<div class="t" style="left:1357px;top:882px;color:#e6e6e6;font-size:13.5px;letter-spacing:-0.6px">SPC</div>
<div class="a" style="left:1394px;top:878px;width:56px;height:21px;border:1px solid #3f3f3f;background:#262626"></div>
<div class="t" style="left:1407px;top:882px;color:#e6e6e6;font-size:13.5px;letter-spacing:-0.7px">CRLF</div>


<!-- ============ OUTPUT PANEL ============ -->
<div class="a" style="left:40px;top:908px;width:1411px;height:171px;border:1px solid #3d3d3d"></div>
<div class="t" style="left:45px;top:915px;color:#c8c8c8;font-size:15px;letter-spacing:0.13px">Output</div>
<svg style="left:1387px;top:919px" width="10" height="5"><path d="M0 0H10L5 5Z" fill="#d0d0d0"/></svg>
<svg style="left:1408px;top:914px" width="10" height="15"><path d="M2.5 1h5v7h-5z M1 8h8" fill="none" stroke="#d0d0d0" stroke-width="1.5"/><path d="M5 8v6" stroke="#d0d0d0" stroke-width="1.3"/><path d="M5.5 2v5" stroke="#d0d0d0" stroke-width="1.5"/></svg>
<svg style="left:1429px;top:916px" width="12" height="12"><path d="M1 1l10 10M11 1L1 11" stroke="#d8d8d8" stroke-width="1.5"/></svg>
<div class="t" style="left:50px;top:945px;color:#e6e6e6;font-size:15px;letter-spacing:0.05px">Show output from:</div>
<div class="a" style="left:181px;top:939px;width:288px;height:25px;background:#333333;border:1px solid #3d3d3d"></div>
<svg style="left:455px;top:949px" width="9" height="5"><path d="M0 0H9L4.5 5Z" fill="#d0d0d0"/></svg>
<div class="a" style="left:477px;top:940px;width:1px;height:22px;background:#3d3d3d"></div>
<svg style="left:487px;top:942px" width="19" height="18"><path d="M5 9C5 4 5 1 8 1s3 3 3 5" fill="none" stroke="#505050" stroke-width="1.3"/><path d="M2 6l3 4 3-4" fill="none" stroke="#505050" stroke-width="1.3"/><path d="M6 11h12M0 13.5h13M0 17h18" stroke="#505050" stroke-width="1.6"/></svg>
<div class="a" style="left:514px;top:940px;width:1px;height:22px;background:#3d3d3d"></div>
<svg style="left:523px;top:942px" width="18" height="18"><path d="M2 4h10M2 4l3-3M2 4l3 3" fill="none" stroke="#505050" stroke-width="1.3"/><path d="M3 11h14M3 14h14M3 17h14" stroke="#505050" stroke-width="1.6"/></svg>
<svg style="left:549px;top:942px" width="18" height="18"><path d="M16 4H6M16 4l-3-3M16 4l-3 3" fill="none" stroke="#505050" stroke-width="1.3"/><path d="M1 11h14M1 14h14M1 17h14" stroke="#505050" stroke-width="1.6"/></svg>
<div class="a" style="left:578px;top:940px;width:1px;height:22px;background:#3d3d3d"></div>
<svg style="left:588px;top:942px" width="19" height="18"><path d="M1 1l6 6M7 1L1 7" stroke="#505050" stroke-width="1.2"/><path d="M10 2h8M10 5h8M10 8h8M1 12h17M1 16h17" stroke="#505050" stroke-width="1.6"/></svg>
<div class="a" style="left:615px;top:940px;width:1px;height:22px;background:#3d3d3d"></div>
<div class="t" style="left:625px;top:942px;color:#e8e8e8;font-size:9px;font-weight:bold;line-height:8px">ab<br>c</div>
<svg style="left:630px;top:946px" width="14" height="14"><path d="M8 1h4v7H3" fill="none" stroke="#4aa6f0" stroke-width="1.5"/><path d="M6 5L2.5 8 6 11" fill="none" stroke="#4aa6f0" stroke-width="1.5"/></svg>
<div class="a" style="left:652px;top:940px;width:1px;height:22px;background:#3d3d3d"></div>
<svg style="left:662px;top:942px" width="18" height="18"><circle cx="9" cy="9" r="8.2" fill="#2a2a2a" stroke="#d8d8d8" stroke-width="1.4"/><path d="M9 4v5h4" fill="none" stroke="#d8d8d8" stroke-width="1.4"/></svg>

<!-- bottom tabs -->
<div class="t" style="left:47px;top:1084px;color:#c8c8c8;font-size:15px;letter-spacing:-0.32px">Package Manager Console</div>
<div class="t" style="left:235px;top:1084px;color:#c8c8c8;font-size:15px;letter-spacing:-0.28px">Error List</div>
<div class="a" style="left:300px;top:1078px;width:60px;height:25px;border:1px solid #3d3d3d;border-top:none;background:#1f1f1f"></div>
<div class="t" style="left:307px;top:1084px;color:#f0f0f0;font-size:15px;letter-spacing:0.13px">Output</div>

<!-- ============ STATUS BAR ============ -->
<div class="a" style="left:0;top:1110px;width:1919px;height:27px;background:#404040"></div>
<svg style="left:4px;top:1114px" width="22" height="22"><path d="M1 1h19v14H14l-3.5 4-3.5-4H1z" fill="none" stroke="#e0e0e0" stroke-width="1.4"/></svg>
<div class="t" style="left:35px;top:1118px;color:#f0f0f0;font-size:15px;letter-spacing:-0.31px">Item(s) Saved</div>
<svg style="left:1477px;top:1115px" width="14" height="18"><path d="M7 17V1M1 7l6-6 6 6" fill="none" stroke="#e0e0e0" stroke-width="1.3"/></svg>
<div class="t" style="left:1502px;top:1118px;color:#f0f0f0;font-size:15px;letter-spacing:-0.03px">Add to Source Control</div>
<svg style="left:1658px;top:1121px" width="9" height="5"><path d="M0 5H9L4.5 0Z" fill="#e0e0e0"/></svg>
<svg style="left:1696px;top:1115px" width="19" height="18"><path d="M1 1h17v4H1z M2.5 5v12h14V5" fill="none" stroke="#e0e0e0" stroke-width="1.3"/><path d="M7 8v5l2.5-2 2.5 2V8" fill="none" stroke="#e0e0e0" stroke-width="1.2"/></svg>
<div class="t" style="left:1722px;top:1118px;color:#f0f0f0;font-size:15px;letter-spacing:-0.15px">Select Repository</div>
<svg style="left:1845px;top:1121px" width="9" height="5"><path d="M0 5H9L4.5 0Z" fill="#e0e0e0"/></svg>
<svg style="left:1881px;top:1114px" width="20" height="22"><path d="M3 15V9c0-4 3-7 6.5-7S16 5 16 9v6l2 2H1z" fill="none" stroke="#e0e0e0" stroke-width="1.3"/></svg>
<div class="a" style="left:1887px;top:1124px;width:16px;height:15px;border-radius:50%;background:#f1707b"></div>
<div class="t" style="left:1891px;top:1126px;color:#1f1f1f;font-size:12px">2</div>


<!-- ============ SOLUTION EXPLORER ============ -->
<div class="a" style="left:1459px;top:88px;width:454px;height:506px;border:1px solid #3d3d3d"></div>
<div class="t" style="left:1464px;top:95px;color:#c8c8c8;font-size:15px;letter-spacing:-0.02px">Solution Explorer</div>
<svg style="left:1850px;top:99px" width="10" height="5"><path d="M0 0H10L5 5Z" fill="#d0d0d0"/></svg>
<svg style="left:1870px;top:94px" width="10" height="15"><path d="M2.5 1h5v7h-5z M1 8h8" fill="none" stroke="#d0d0d0" stroke-width="1.5"/><path d="M5 8v6" stroke="#d0d0d0" stroke-width="1.3"/><path d="M5.5 2v5" stroke="#d0d0d0" stroke-width="1.5"/></svg>
<svg style="left:1891px;top:96px" width="12" height="12"><path d="M1 1l10 10M11 1L1 11" stroke="#d8d8d8" stroke-width="1.5"/></svg>
<!-- toolbar -->
<svg style="left:1467px;top:121px" width="22" height="22"><path d="M7 2h12v14H10" fill="#2a2a2a" stroke="#cfcfcf" stroke-width="1.3"/><path d="M10 5h7M11 8h6M11 11h6M11 14h6" stroke="#cfcfcf" stroke-width="1.1"/><path d="M1 14l3 2.5L1 19v-5zM4 16.5L10 12v9z" fill="none" stroke="#8f5fd9" stroke-width="1.6"/></svg>
<div class="a" style="left:1496px;top:121px;width:1px;height:24px;background:#3d3d3d"></div>
<svg style="left:1505px;top:121px" width="21" height="22"><path d="M0 1h7L3.5 5z" fill="#4aa6f0"/><path d="M3.5 4v4" stroke="#4aa6f0" stroke-width="1.5"/><circle cx="13" cy="13" r="6.5" fill="none" stroke="#d8d8d8" stroke-width="1.4"/><path d="M12.5 9v4.5h3.5" fill="none" stroke="#d8d8d8" stroke-width="1.3"/></svg>
<svg style="left:1532px;top:132px" width="7" height="4"><path d="M0 0H7L3.5 4Z" fill="#d0d0d0"/></svg>
<svg style="left:1549px;top:125px" width="17" height="15"><path d="M1 4h15M1 4l3-3M16 11H1M16 11l-3 3" fill="none" stroke="#d0d0d0" stroke-width="1.4"/></svg>
<svg style="left:1574px;top:122px" width="20" height="20"><path d="M5 3.5A8 8 0 1 0 10 2" fill="none" stroke="#4aa6f0" stroke-width="1.7"/><path d="M3 1h4v4" fill="none" stroke="#4aa6f0" stroke-width="1.6"/></svg>
<svg style="left:1602px;top:122px" width="19" height="20"><path d="M4 1h14v14" fill="none" stroke="#bdbdbd" stroke-width="1.3"/><path d="M1 4h14v15H1z" fill="#2a2a2a" stroke="#cfcfcf" stroke-width="1.4"/><path d="M4 11.5h8" stroke="#cfcfcf" stroke-width="1.6"/></svg>
<svg style="left:1629px;top:122px" width="19" height="20"><path d="M6 1h12v13H6z" fill="#2a2a2a" stroke="#bdbdbd" stroke-width="1.3"/><path d="M1 6h11v13H1z" fill="#2a2a2a" stroke="#cfcfcf" stroke-width="1.4"/></svg>
<div class="a" style="left:1656px;top:121px;width:1px;height:24px;background:#3d3d3d"></div>
<svg style="left:1668px;top:127px" width="14" height="11"><path d="M5 1L1 5.5 5 10M9 1l4 4.5L9 10" fill="none" stroke="#d0d0d0" stroke-width="1.4"/></svg>
<svg style="left:1692px;top:121px" width="20" height="22"><path d="M2 20l9-9" stroke="#d0d0d0" stroke-width="3"/><path d="M10 9a5 5 0 0 0 8 3l-3-2 1-3 3-1a5 5 0 0 0-9 3z" fill="#d0d0d0"/></svg>
<div class="a" style="left:1716px;top:118px;width:28px;height:29px;border:1px solid #7160e8"></div>
<svg style="left:1719px;top:124px" width="23" height="17"><path d="M2 13h14v-3H5" fill="none" stroke="#d0d0d0" stroke-width="1.3"/><path d="M1 15h17" stroke="#d0d0d0" stroke-width="1.3"/><path d="M16 4l2-2M19 7h3M19 11l2 1M14 2l1 3" stroke="#e8c46a" stroke-width="1.3"/></svg>
<!-- search -->
<div class="a" style="left:1462px;top:150px;width:447px;height:27px;background:#333333;border:1px solid #3a3a3a"></div>
<div class="t" style="left:1468px;top:157px;color:#c4c4c4;font-size:15px;letter-spacing:-0.14px">Search Solution Explorer (Ctrl+`)</div>
<svg style="left:1874px;top:155px" width="16" height="16"><circle cx="10" cy="6" r="4.3" fill="none" stroke="#d8d8d8" stroke-width="1.8"/><path d="M7 9l-5.5 5.5" stroke="#d8d8d8" stroke-width="2.2"/></svg>
<svg style="left:1896px;top:162px" width="8" height="4"><path d="M0 0H8L4 4Z" fill="#d0d0d0"/></svg>
<!-- tree -->
<svg style="left:1478px;top:183px" width="20" height="18"><path d="M1 1h17v16H8" fill="none" stroke="#bdbdbd" stroke-width="1.3"/><path d="M1 5h17M1 1v16h4" fill="none" stroke="#bdbdbd" stroke-width="1.3"/><path d="M9 11l3 2.5-3 2.5zM12 13.5l6-4.5v9z" fill="none" stroke="#8f5fd9" stroke-width="1.5"/></svg>
<div class="t" style="left:1504px;top:184px;color:#f0f0f0;font-size:15px;letter-spacing:0.06px">Solution '04Moviment' (2 of 2 projects)</div>
<div class="a" style="left:1460px;top:203px;width:452px;height:24px;background:#3b3b3b"></div>
<svg style="left:1472px;top:208px" width="8" height="14"><path d="M1 1l6 6-6 6z" fill="none" stroke="#d0d0d0" stroke-width="1.3"/></svg>
<svg style="left:1500px;top:207px" width="21" height="18"><path d="M4 1h16v14H9" fill="none" stroke="#bdbdbd" stroke-width="1.3"/><path d="M4 5h16M4 1v6" fill="none" stroke="#bdbdbd" stroke-width="1.3"/><path d="M5 9l3.5 2v4L5 17l-3.5-2v-4z" fill="#3b3b3b" stroke="#a47fd6" stroke-width="1.2"/><path d="M1.5 11L5 13l3.5-2M5 13v4" fill="none" stroke="#a47fd6" stroke-width="1"/></svg>
<div class="t" style="left:1526px;top:208px;color:#ffffff;font-size:15px;font-weight:bold;letter-spacing:-0.45px">Assembly-CSharp</div>
<svg style="left:1472px;top:234px" width="10" height="10"><path d="M9 1V9H1z" fill="#d0d0d0"/></svg>
<svg style="left:1500px;top:231px" width="21" height="18"><path d="M4 1h16v14H9" fill="none" stroke="#bdbdbd" stroke-width="1.3"/><path d="M4 5h16M4 1v6" fill="none" stroke="#bdbdbd" stroke-width="1.3"/><path d="M5 9l3.5 2v4L5 17l-3.5-2v-4z" fill="#1f1f1f" stroke="#a47fd6" stroke-width="1.2"/><path d="M1.5 11L5 13l3.5-2M5 13v4" fill="none" stroke="#a47fd6" stroke-width="1"/></svg>
<div class="t" style="left:1526px;top:232px;color:#f0f0f0;font-size:15px;letter-spacing:-0.16px">MerryYellow.CodeAssist.Editor</div>
<svg style="left:1495px;top:256px" width="8" height="14"><path d="M1 1l6 6-6 6z" fill="none" stroke="#d0d0d0" stroke-width="1.3"/></svg>
<svg style="left:1522px;top:256px" width="21" height="16"><path d="M11 1h8v7h-8zM1 8h6v6H1zM9 9h7v6H9z" fill="none" stroke="#c8c8c8" stroke-width="1.3"/><path d="M7 9l4-4" stroke="#c8c8c8" stroke-width="1.2"/></svg>
<div class="t" style="left:1549px;top:256px;color:#f0f0f0;font-size:15px;letter-spacing:-0.47px">References</div>
<svg style="left:1495px;top:280px" width="8" height="14"><path d="M1 1l6 6-6 6z" fill="none" stroke="#d0d0d0" stroke-width="1.3"/></svg>
<svg style="left:1523px;top:280px" width="20" height="16"><path d="M1 1h7l2 2h9v12H1z" fill="#dcc07a"/></svg>
<div class="t" style="left:1549px;top:280px;color:#f0f0f0;font-size:15px;letter-spacing:-0.73px">Packages</div>

<!-- tabs -->
<div class="t" style="left:1466px;top:599px;color:#c8c8c8;font-size:15px;letter-spacing:0.03px">GitHub Copilot Chat</div>
<div class="a" style="left:1607px;top:593px;width:128px;height:26px;border:1px solid #3d3d3d;border-top:none;background:#1f1f1f"></div>
<div class="t" style="left:1614px;top:599px;color:#f0f0f0;font-size:15px;letter-spacing:-0.03px">Solution Explorer</div>
<div class="t" style="left:1742px;top:599px;color:#c8c8c8;font-size:15px;letter-spacing:-0.43px">Git Changes</div>

<!-- ============ PROPERTIES ============ -->
<div class="a" style="left:1459px;top:627px;width:454px;height:476px;border:1px solid #3d3d3d"></div>
<div class="t" style="left:1464px;top:634px;color:#c8c8c8;font-size:15px;letter-spacing:-0.14px">Properties</div>
<svg style="left:1850px;top:638px" width="10" height="5"><path d="M0 0H10L5 5Z" fill="#d0d0d0"/></svg>
<svg style="left:1870px;top:633px" width="10" height="15"><path d="M2.5 1h5v7h-5z M1 8h8" fill="none" stroke="#d0d0d0" stroke-width="1.5"/><path d="M5 8v6" stroke="#d0d0d0" stroke-width="1.3"/><path d="M5.5 2v5" stroke="#d0d0d0" stroke-width="1.5"/></svg>
<svg style="left:1891px;top:635px" width="12" height="12"><path d="M1 1l10 10M11 1L1 11" stroke="#d8d8d8" stroke-width="1.5"/></svg>
<div class="a" style="left:1460px;top:655px;width:452px;height:28px;background:#3b3b3b"></div>
<svg style="left:1897px;top:668px" width="8" height="4"><path d="M0 0H8L4 4Z" fill="#d0d0d0"/></svg>
<div class="a" style="left:1463px;top:685px;width:29px;height:29px;border:1px solid #7160e8"></div>
<svg style="left:1468px;top:690px" width="19" height="19"><rect x="1" y="2" width="4" height="4" fill="none" stroke="#d0d0d0" stroke-width="1.2"/><rect x="1" y="12" width="4" height="4" fill="none" stroke="#d0d0d0" stroke-width="1.2"/><path d="M8 2h9M8 5h9M8 8h9M8 12h9M8 15h9" stroke="#d0d0d0" stroke-width="1.2"/></svg>
<svg style="left:1496px;top:688px" width="22" height="22"><rect x="1" y="1" width="10" height="9" fill="#555" stroke="#bdbdbd"/><text x="2.5" y="9" font-size="8" font-family="Liberation Sans" fill="#e0e0e0">A</text><text x="2.5" y="20" font-size="8" font-family="Liberation Sans" fill="#e0e0e0" font-weight="bold">Z</text><path d="M16 4v14M13 15l3 3 3-3" fill="none" stroke="#4aa6f0" stroke-width="1.6"/></svg>
<div class="a" style="left:1524px;top:688px;width:1px;height:24px;background:#3d3d3d"></div>
<svg style="left:1531px;top:688px" width="22" height="22"><path d="M2 20l9-9" stroke="#8a8a8a" stroke-width="3.5"/><circle cx="15" cy="7" r="5.5" fill="#8a8a8a"/><circle cx="16" cy="6" r="1.6" fill="#1f1f1f"/></svg>
<div class="a" style="left:1460px;top:715px;width:452px;height:1px;background:#333"></div>
<div class="a" style="left:1460px;top:1023px;width:452px;height:1px;background:#3d3d3d"></div>

<!-- ============ ARROWS ============ -->
<svg style="left:0;top:0" width="1919" height="1137">
<defs><marker id="ah" markerWidth="11" markerHeight="7" refX="10" refY="3.5" orient="auto" markerUnits="userSpaceOnUse"><path d="M0 0.2L11 3.5L0 6.8z" fill="#f8f8f8"/></marker></defs>
<g stroke="#ececec" stroke-width="1.35" marker-end="url(#ah)">
<line x1="663.4" y1="389.4" x2="492.5" y2="446.5"/>
<line x1="1240" y1="441" x2="1150.5" y2="497.4"/>
<line x1="646" y1="549.2" x2="519.5" y2="590.5"/>
<line x1="1291.7" y1="555.2" x2="1134" y2="629.4"/>
</g>
</svg>

</body></html>
